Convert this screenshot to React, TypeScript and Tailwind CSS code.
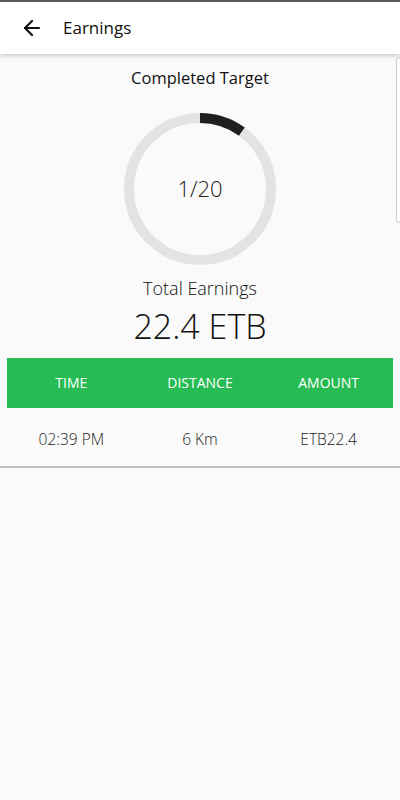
import { ArrowLeft } from "lucide-react";

const font = { fontFamily: '"Open Sans", "Noto Sans", sans-serif' };

function ProgressRing() {
  const r = 71;
  const c = 2 * Math.PI * r;
  const part = c * 0.1;
  return (
    <div className="relative mt-[22px] h-[152px] w-[152px]">
      <svg width="152" height="152" viewBox="0 0 152 152">
        <circle cx="76" cy="76" r={r} fill="none" stroke="#e3e3e3" strokeWidth="10" />
        <circle
          cx="76"
          cy="76"
          r={r}
          fill="none"
          stroke="#1f1f1f"
          strokeWidth="10"
          strokeDasharray={`${part} ${c}`}
          transform="rotate(-90 76 76)"
        />
      </svg>
      <div className="absolute inset-0 flex items-center justify-center text-[22px] font-light text-[#222]">
        1/20
      </div>
    </div>
  );
}

export default function App() {
  return (
    <div className="relative h-[800px] w-[400px] overflow-hidden bg-[#fafafa]" style={font}>
      <div className="h-[2px] bg-[#5a5a5a]" />
      <header className="relative z-10 flex h-[52px] items-center bg-white shadow-[0_2px_4px_rgba(0,0,0,0.18)]">
        <ArrowLeft className="ml-[20px] h-[24px] w-[24px] text-[#111]" strokeWidth={2.2} />
        <span className="ml-[19px] text-[17px] text-[#111]">Earnings</span>
      </header>

      <div className="absolute right-0 top-[57px] h-[166px] w-[4px] rounded-l-[4px] border border-r-0 border-[#cfcfcf] bg-white" />

      <main className="flex flex-col items-center">
        <h2 className="mt-[12px] text-[16.5px] text-[#111]">Completed Target</h2>
        <ProgressRing />
        <p className="mt-[10px] text-[18px] font-light text-[#111]">Total Earnings</p>
        <p className="mt-[2px] text-[34px] font-light leading-[44px] text-[#111]">22.4 ETB</p>

        <div className="mt-[10px] w-[386px]">
          <div className="grid h-[50px] grid-cols-3 items-center bg-[#27bb53] text-center text-[14px] text-white">
            <span>TIME</span>
            <span>DISTANCE</span>
            <span>AMOUNT</span>
          </div>
          <div className="grid h-[58px] grid-cols-3 items-center pt-[6px] text-center text-[15.5px] font-light text-[#1a1a1a]">
            <span>02:39 PM</span>
            <span>6 Km</span>
            <span>ETB22.4</span>
          </div>
        </div>
        <div className="h-[2px] w-full bg-[#bdbdbd]" />
      </main>
    </div>
  );
}
